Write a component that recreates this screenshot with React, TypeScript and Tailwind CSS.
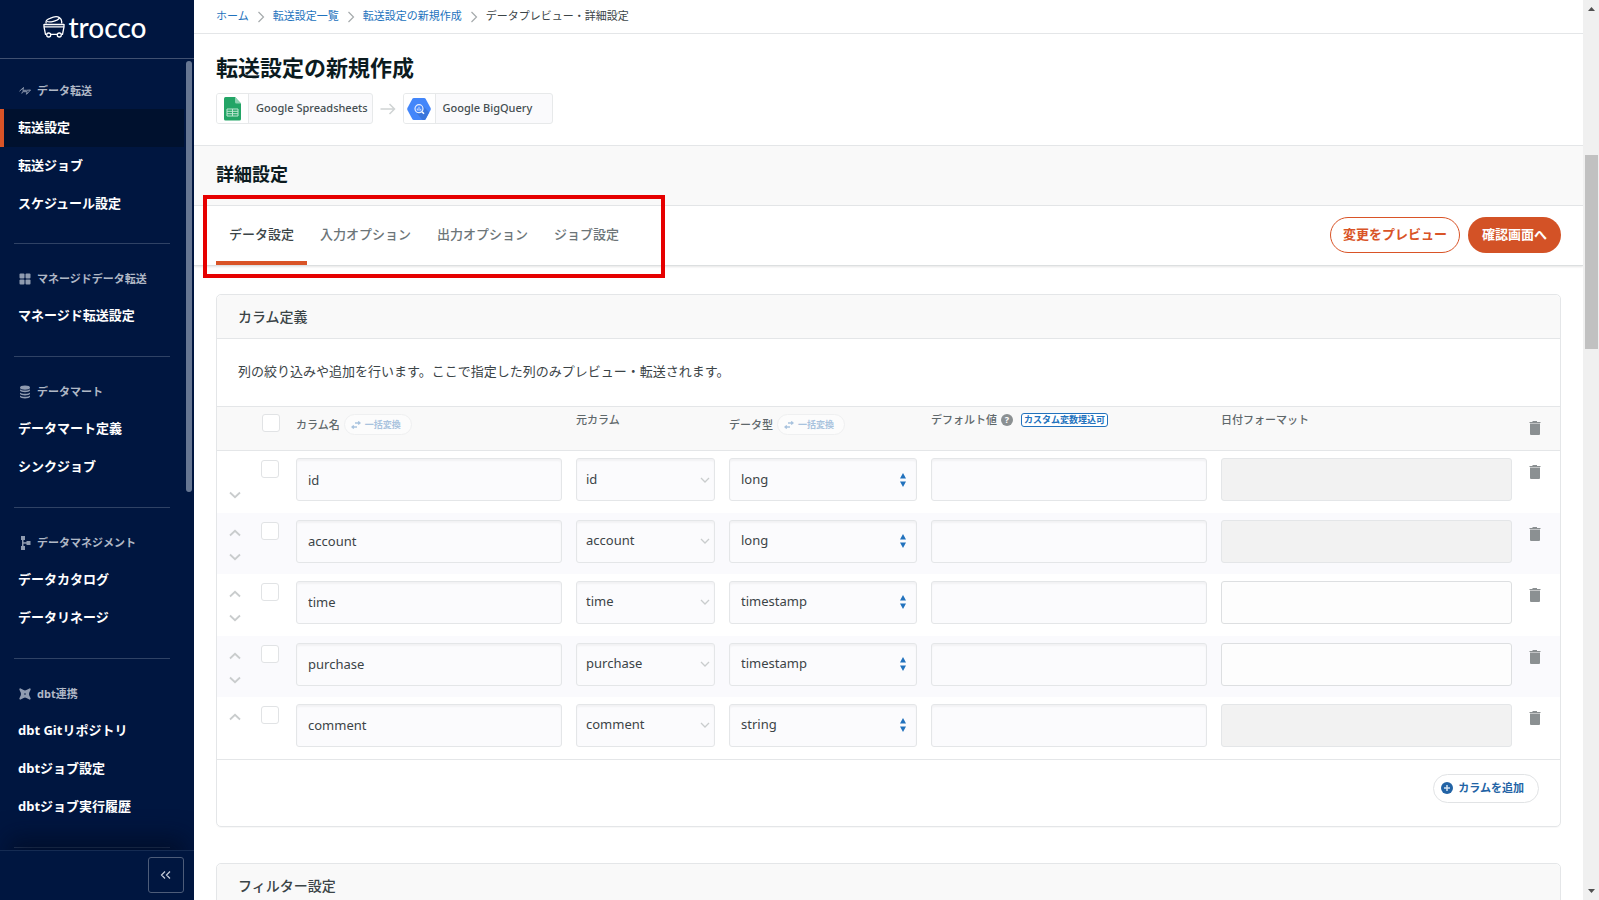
import React from "react";

type NavSection = { label: string; icon: React.ReactNode; items: string[]; active?: string };

type ColumnRow = { name: string; type: string; hasFormat: boolean };

const TransferIcon = () => (
  <svg width="12" height="12" viewBox="0 0 12 12" fill="none" stroke="currentColor" strokeWidth="1" aria-hidden="true">
    <path d="M0.500 6.200 L4.500 2.500 L3.800 5.300 H7.500 L11.500 5 L7.500 9.300 L8.200 6.700 H3.600 L2.800 8.500" />
  </svg>
);

const GridIcon = () => (
  <svg width="12" height="12" viewBox="0 0 12 12" fill="currentColor" aria-hidden="true">
    <rect x="0.500" y="0.500" width="5" height="5" rx="1" />
    <rect x="6.500" y="0.500" width="5" height="5" rx="1" />
    <rect x="0.500" y="6.500" width="5" height="5" rx="1" />
    <rect x="6.500" y="6.500" width="5" height="5" rx="1" />
  </svg>
);

const DatabaseIcon = () => (
  <svg width="12" height="14" viewBox="0 0 12 14" fill="currentColor" aria-hidden="true">
    <ellipse cx="6" cy="2.600" rx="5" ry="2.200" />
    <path d="M1 4.200c1 1.700 9 1.700 10 0v1.400c-.6 2.300-9.400 2.300-10 0z" />
    <path d="M1 7.400c1 1.700 9 1.700 10 0v1.400c-.6 2.300-9.400 2.300-10 0z" />
    <path d="M1 10.500c1 1.700 9 1.700 10 0v1.200c-.6 2.300-9.400 2.300-10 0z" />
  </svg>
);

const TreeIcon = () => (
  <svg width="12" height="14" viewBox="0 0 12 14" fill="currentColor" aria-hidden="true">
    <rect x="2" y="0" width="4" height="4" />
    <rect x="2" y="10" width="4" height="4" />
    <rect x="3" y="3" width="1.500" height="8" />
    <rect x="3" y="6.200" width="5" height="1.500" />
    <rect x="7.500" y="5" width="4" height="4" />
  </svg>
);

const DbtIcon = () => (
  <svg width="12" height="12" viewBox="0 0 12 12" fill="currentColor" aria-hidden="true">
    <path
      fillRule="evenodd"
      d="M0.300 1.400Q.4.200 1.600.4L4.600 2.100Q6 2.800 7.400 2.100L10.400.4Q11.600.2 11.700 1.400L10.300 4.600Q9.700 6 10.300 7.400L11.700 10.600Q11.600 11.800 10.400 11.600L7.400 9.900Q6 9.200 4.600 9.900L1.600 11.600Q.4 11.800.3 10.600L1.700 7.400Q2.300 6 1.700 4.600ZM6 5.200a.8.800 0 1 0 0 1.600a.8.800 0 1 0 0-1.600Z"
    />
  </svg>
);

const CartIcon = () => (
  <svg width="22" height="22" viewBox="0 0 22 22" fill="none" stroke="white" strokeWidth="1.300" aria-hidden="true">
    <path d="M3.300 7.500C2.200 4.600 4.500 3.200 7 2.300C10 .9 14.500.3 16.400 1.600C18.500 3 19 5.500 18.500 7.500" />
    <path d="M4 5.500C6.500 6.700 14.500 5 16.500 2.200" />
    <path d="M1 8.500H21M1 10.900H21" />
    <path d="M1 8V11L2.500 18.300H3.500M8 18.300H14M18.500 18.300H19.500L21 11V8" />
    <circle cx="5.700" cy="19" r="2" />
    <circle cx="16.300" cy="19" r="2" />
  </svg>
);

const Chevron = ({ up }: { up?: boolean }) => (
  <svg width="12" height="8" viewBox="0 0 12 8" fill="none" stroke="currentColor" strokeWidth="1.800" aria-hidden="true">
    <path d={up ? "M1 6.500L6 1.800L11 6.500" : "M1 1.500L6 6.200L11 1.500"} />
  </svg>
);

const TrashIcon = () => (
  <svg width="12" height="14" viewBox="0 0 12 14" fill="#8b9092" aria-hidden="true">
    <path d="M3.500 0h4.500v1h3.500v1H.5V1h3z" />
    <path d="M1 2.500h10V13q0 1-1 1H2q-1 0-1-1z" />
  </svg>
);

const SwapIcon = () => (
  <svg width="10" height="8" viewBox="0 0 10 8" fill="none" stroke="currentColor" strokeWidth="1.300" aria-hidden="true">
    <path d="M4 2H9M7.200 0.400L9 2L7.200 3.600M6 6H1M2.800 4.400L1 6L2.800 7.600" />
  </svg>
);

const SheetsIcon = () => (
  <svg width="17" height="24" viewBox="0 0 17 24" aria-hidden="true">
    <path d="M1.500 0H11l6 6.500V22q0 1.500-1.500 1.500h-14Q0 23.500 0 22V1.500Q0 0 1.500 0z" fill="#23a566" />
    <path d="M11 0l6 6.500h-4.500Q11 6.500 11 5z" fill="#8ed1b1" />
    <path d="M3 12h11v7H3zM3 14.300h11M3 16.700h11M8.500 12v7" fill="none" stroke="#bfe6d2" strokeWidth="1" />
  </svg>
);

const BigQueryIcon = () => (
  <svg width="24" height="24" viewBox="0 0 24 24" aria-hidden="true">
    <path d="M6.800 1h10.400q.9 0 1.400.8l5 9.300q.4.900 0 1.800l-5 9.300q-.5.800-1.400.8H6.800q-.9 0-1.400-.8l-5-9.300q-.4-.9 0-1.800l5-9.300Q5.900 1 6.800 1z" fill="#4386fa" />
    <path d="M15 8l7.200 7.300-3.600 6.900q-.5.800-1.400.8H15.500L9.500 16z" fill="#3a76dc" />
    <circle cx="12" cy="11.700" r="4" fill="#4386fa" stroke="#e4edff" strokeWidth="1.200" />
    <path d="M10.300 11.500v2M12 9.800v4M13.700 11.800v1.700" stroke="#d5e2ff" strokeWidth="1" />
    <path d="M15 14.800l2 2" stroke="#fff" strokeWidth="1.600" />
  </svg>
);

const sections: NavSection[] = [
  { label: "データ転送", icon: <TransferIcon />, items: ["転送設定", "転送ジョブ", "スケジュール設定"], active: "転送設定" },
  { label: "マネージドデータ転送", icon: <GridIcon />, items: ["マネージド転送設定"] },
  { label: "データマート", icon: <DatabaseIcon />, items: ["データマート定義", "シンクジョブ"] },
  { label: "データマネジメント", icon: <TreeIcon />, items: ["データカタログ", "データリネージ"] },
  { label: "dbt連携", icon: <DbtIcon />, items: ["dbt Gitリポジトリ", "dbtジョブ設定", "dbtジョブ実行履歴"] },
];

const rows: ColumnRow[] = [
  { name: "id", type: "long", hasFormat: false },
  { name: "account", type: "long", hasFormat: false },
  { name: "time", type: "timestamp", hasFormat: true },
  { name: "purchase", type: "timestamp", hasFormat: true },
  { name: "comment", type: "string", hasFormat: false },
];

const crumbs = ["ホーム", "転送設定一覧", "転送設定の新規作成"];
const tabs = ["データ設定", "入力オプション", "出力オプション", "ジョブ設定"];

const field =
  "block h-[43px] w-full rounded-[3px] border border-[#e4e6e8] bg-[#fbfbfd] text-[13px] text-[#3b4447] shadow-[inset_0_2px_2px_rgba(0,0,0,0.04)] outline-none";
const checkbox = "block size-[18px] appearance-none rounded-[3px] border border-[#e1e3e5] bg-white";

function Sidebar() {
  return (
    <aside className="flex w-[194px] shrink-0 flex-col overflow-hidden bg-[#001640]">
      <div className="flex h-[59px] shrink-0 items-center justify-center gap-[3px] border-b border-[#405070] pr-1 pb-[5px]">
        <CartIcon />
        <span className="font-[Lato,sans-serif] text-[28px] leading-8 font-medium text-white">trocco</span>
      </div>
      <div className="flex min-h-0 flex-1">
        <nav className="w-[184px] overflow-hidden">
          {sections.map((s, i) => (
            <div key={s.label}>
              {i > 0 && <hr className="mx-[14px] border-[#2f4265]" />}
              <div className={i > 0 ? "pt-[17px] pb-[21px]" : "pt-[14px] pb-5"}>
                <div className="flex h-9 items-center gap-[6px] pl-[19px] text-[11px] font-bold text-[#b0b8c6]">
                  <span className="flex w-3 justify-center text-[#8f9bb0]">{s.icon}</span>
                  {s.label}
                </div>
                <ul>
                  {s.items.map((item) => (
                    <li key={item}>
                      <a
                        href="#"
                        className={
                          item === s.active
                            ? "flex h-[38px] items-center border-l-4 border-[#d95427] bg-[#00112e] pl-[14px] text-[13px] font-bold text-white"
                            : "flex h-[38px] items-center pl-[18px] text-[13px] font-bold text-white"
                        }
                      >
                        {item}
                      </a>
                    </li>
                  ))}
                </ul>
              </div>
            </div>
          ))}
          <hr className="mx-[14px] border-[#2f4265]" />
        </nav>
        <div className="ml-[2px] pt-[2px]">
          <div className="h-[431px] w-[6px] rounded-full bg-[#667692]" />
        </div>
      </div>
      <div className="z-10 flex h-[50px] shrink-0 items-center justify-end border-t border-[#152b52] bg-[#001640] pr-[10px] pb-[2px] shadow-[0_-20px_24px_-8px_rgba(0,12,34,0.7)]">
        <button type="button" aria-label="メニューを閉じる" className="flex size-9 items-center justify-center rounded-[3px] border border-[#4d5c79] text-[#c5ccd8]">
          <svg width="12" height="10" viewBox="0 0 12 10" fill="none" stroke="currentColor" strokeWidth="1.200" aria-hidden="true">
            <path d="M5 1.500L1.500 5L5 8.500M10 1.500L6.500 5L10 8.500" />
          </svg>
        </button>
      </div>
    </aside>
  );
}

function BulkButton() {
  return (
    <button type="button" className="flex h-[21px] w-[68px] items-center gap-1 rounded-full border border-[#eff0f1] bg-[#fcfcfc] pl-[6px] text-[9px] font-bold text-[#a9c3de]">
      <SwapIcon />
      一括変換
    </button>
  );
}

function TrashButton({ label }: { label: string }) {
  return (
    <button type="button" aria-label={label} className="flex w-full justify-center pr-[9px]">
      <TrashIcon />
    </button>
  );
}

function ColumnTable() {
  return (
    <table className="w-full table-fixed border-collapse text-left">
      <colgroup>
        <col className="w-[36px]" />
        <col className="w-[36px]" />
        <col className="w-[280px]" />
        <col className="w-[153px]" />
        <col className="w-[202px]" />
        <col className="w-[290px]" />
        <col className="w-[305px]" />
        <col className="w-[41px]" />
      </colgroup>
      <thead>
        <tr className="h-[44px] border-y border-[#e4e6e8] bg-[#f9f9f9] align-top text-[11px] leading-4 text-[#5f686b]">
          <td />
          <td className="pt-[7px] pl-[9px]">
            <input type="checkbox" aria-label="すべて選択" className={checkbox} />
          </td>
          <th className="px-[7px] pt-[7px] font-medium">
            <div className="flex items-center gap-1">
              カラム名 <BulkButton />
            </div>
          </th>
          <th className="px-[7px] pt-[5px] font-medium">元カラム</th>
          <th className="px-[7px] pt-[7px] font-medium">
            <div className="flex items-center gap-1">
              データ型 <BulkButton />
            </div>
          </th>
          <th className="px-[7px] pt-[5px] font-medium">
            <div className="flex items-center gap-1">
              デフォルト値
              <span className="flex size-3 items-center justify-center rounded-full bg-[#8b9092] text-[9px] font-bold text-white">?</span>
              <span className="ml-1 flex h-[14px] items-center rounded-[3px] border border-[#2272bd] bg-white px-[2px] text-[9px] font-bold text-[#2272bd]">
                カスタム変数埋込可
              </span>
            </div>
          </th>
          <th className="px-[7px] pt-[5px] font-medium">日付フォーマット</th>
          <td className="pt-[14px]">
            <TrashButton label="すべて削除" />
          </td>
        </tr>
      </thead>
      <tbody>
        {rows.map((r, i) => (
          <tr key={r.name} className="h-[62px] align-top even:h-[61px] even:bg-[#fafafd]">
            <td className="pt-4 text-[#c9cccd]">
              <div className="flex flex-col items-center gap-4">
                <button type="button" aria-label="上へ移動" className={i === 0 ? "invisible" : ""}>
                  <Chevron up />
                </button>
                <button type="button" aria-label="下へ移動" className={i === rows.length - 1 ? "invisible" : ""}>
                  <Chevron />
                </button>
              </div>
            </td>
            <td className="pt-[9px] pl-2">
              <input type="checkbox" aria-label={r.name + "を選択"} className={checkbox} />
            </td>
            <td className="px-[7px] pt-[7px]">
              <input aria-label="カラム名" defaultValue={r.name} className={field + " px-[11px]"} />
            </td>
            <td className="px-[7px] pt-[7px]">
              <div className="relative">
                <select aria-label="元カラム" defaultValue={r.name} className={field + " appearance-none px-[9px]"}>
                  {rows.map((o) => (
                    <option key={o.name}>{o.name}</option>
                  ))}
                </select>
                <span className="pointer-events-none absolute inset-y-0 right-[5px] flex items-center text-[#c9cccd]">
                  <svg width="10" height="6" viewBox="0 0 10 6" fill="none" stroke="currentColor" strokeWidth="1.300" aria-hidden="true">
                    <path d="M1 1L5 5L9 1" />
                  </svg>
                </span>
              </div>
            </td>
            <td className="px-[7px] pt-[7px]">
              <div className="relative">
                <select aria-label="データ型" defaultValue={r.type} className={field + " appearance-none px-[11px]"}>
                  <option>long</option>
                  <option>timestamp</option>
                  <option>string</option>
                </select>
                <span className="pointer-events-none absolute inset-y-0 right-[11px] flex items-center">
                  <svg width="6" height="14" viewBox="0 0 6 14" fill="#2272bd" aria-hidden="true">
                    <path d="M3 0L6 5.500H0zM3 14L6 8.500H0z" />
                  </svg>
                </span>
              </div>
            </td>
            <td className="px-[7px] pt-[7px]">
              <input aria-label="デフォルト値" className={field + " px-[11px]"} />
            </td>
            <td className="px-[7px] pt-[7px]">
              <input
                aria-label="日付フォーマット"
                disabled={!r.hasFormat}
                className={
                  r.hasFormat
                    ? "block h-[43px] w-full rounded-[3px] border border-[#dddfe1] bg-[#fdfdfd] px-[11px] text-[13px]"
                    : "block h-[43px] w-full rounded-[3px] border border-[#e4e6e8] bg-[#f2f2f2] px-[11px] text-[13px]"
                }
              />
            </td>
            <td className="pt-[14px]">
              <TrashButton label={r.name + "を削除"} />
            </td>
          </tr>
        ))}
      </tbody>
    </table>
  );
}

function Connector({ icon, name, wide }: { icon: React.ReactNode; name: string; wide?: boolean }) {
  return (
    <div className="flex h-[31px] overflow-hidden rounded-[3px] border border-[#e7e9ea] bg-[#fafafc]">
      <span className="flex w-8 items-center justify-center border-r border-[#e7e9ea] bg-white">{icon}</span>
      <span
        className={
          wide
            ? "flex items-center pr-5 pl-[7px] text-[11px] font-medium text-[#454e51]"
            : "flex items-center pr-1 pl-[7px] text-[11px] font-medium text-[#454e51]"
        }
      >
        {name}
      </span>
    </div>
  );
}

export default function App() {
  return (
    <div className="flex h-screen overflow-hidden bg-white font-['Noto_Sans','Noto_Sans_CJK_JP',sans-serif] text-[#3b4447]">
      <Sidebar />
      <main className="min-w-0 flex-1 overflow-hidden">
        <nav aria-label="パンくず" className="flex h-[34px] items-center border-b border-[#e4e6e8] px-[22px] text-[11px]">
          {crumbs.map((c) => (
            <React.Fragment key={c}>
              <a href="#" className="text-[#2272bd]">
                {c}
              </a>
              <svg width="8" height="12" viewBox="0 0 8 12" className="mx-2" fill="none" stroke="#a5aaac" strokeWidth="1.200" aria-hidden="true">
                <path d="M1.500 1L6.500 6L1.500 11" />
              </svg>
            </React.Fragment>
          ))}
          <span>データプレビュー・詳細設定</span>
        </nav>

        <header className="h-[111px] px-[22px] pt-[17px]">
          <h1 className="text-[22px] leading-8 font-bold text-[#0c1b1f]">転送設定の新規作成</h1>
          <div className="mt-[10px] flex items-center">
            <Connector icon={<SheetsIcon />} name="Google Spreadsheets" />
            <svg width="16" height="12" viewBox="0 0 16 12" className="mx-[7px]" fill="none" stroke="#cfd3d4" strokeWidth="1.500" aria-hidden="true">
              <path d="M0.500 6H14.500M9.500 1L14.500 6L9.500 11" />
            </svg>
            <Connector icon={<BigQueryIcon />} name="Google BigQuery" wide />
          </div>
        </header>

        <div className="flex h-[61px] items-center border-y border-[#e4e6e8] bg-[#f9f9f9] px-[22px] pb-[2px]">
          <h2 className="text-[18px] font-bold text-[#0c1b1f]">詳細設定</h2>
        </div>

        <div className="relative flex h-[60px] items-center justify-between border-b border-[#dcdfe0] px-[22px] shadow-[0_1px_2px_rgba(0,0,0,0.1)]">
          <div role="tablist" className="flex h-full">
            {tabs.map((t, i) => (
              <button
                key={t}
                type="button"
                role="tab"
                aria-selected={i === 0}
                className={
                  i === 0
                    ? "border-b-4 border-[#d95427] px-[13px] pt-[2px] text-[13px] font-medium text-[#3b4447]"
                    : "border-b-4 border-transparent px-[13px] pt-[2px] text-[13px] font-medium text-[#6c7578]"
                }
              >
                {t}
              </button>
            ))}
          </div>
          <div className="flex gap-2 pb-[2px]">
            <button type="button" className="h-9 rounded-full border border-[#d95427] bg-white px-3 text-[13px] font-bold text-[#d95427]">
              変更をプレビュー
            </button>
            <button type="button" className="h-9 rounded-full bg-[#d35226] px-[14px] text-[13px] font-bold text-white">
              確認画面へ
            </button>
          </div>
          <div className="pointer-events-none absolute top-[-11px] left-[9px] h-[83px] w-[462px] border-4 border-[#e60000]" />
        </div>

        <div className="flex flex-col gap-9 px-[22px] pt-7">
          <section className="rounded-[5px] border border-[#e4e6e8] shadow-[0_1px_1px_rgba(0,0,0,0.03)]">
            <h3 className="flex h-[44px] items-center rounded-t-[5px] border-b border-[#e4e6e8] bg-[#f9f9f9] px-[21px] text-[14px] font-medium">カラム定義</h3>
            <p className="px-[21px] pt-5 pb-[23px] text-[13px] leading-6">
              列の絞り込みや追加を行います。ここで指定した列のみプレビュー・転送されます。
            </p>
            <ColumnTable />
            <div className="flex h-[67px] justify-end border-t border-[#e4e6e8] pt-[14px] pr-[21px]">
              <button type="button" className="flex h-[29px] items-center gap-[5px] rounded-full border border-[#e1e3e5] bg-white pr-[14px] pl-[7px] text-[11px] font-bold text-[#2263a5]">
                <svg width="12" height="12" viewBox="0 0 12 12" aria-hidden="true">
                  <circle cx="6" cy="6" r="6" fill="#2263a5" />
                  <path d="M6 3v6M3 6h6" stroke="#d5e3f2" strokeWidth="1.500" />
                </svg>
                カラムを追加
              </button>
            </div>
          </section>

          <section className="rounded-t-[5px] border border-[#e4e6e8]">
            <h3 className="flex h-[44px] items-center rounded-t-[5px] border-b border-[#e4e6e8] bg-[#f9f9f9] px-[21px] text-[14px] font-medium">フィルター設定</h3>
          </section>
        </div>
      </main>

      <div aria-hidden="true" className="flex w-4 shrink-0 flex-col items-center bg-[#f0f0f0] py-[7px]">
        <svg width="7" height="4" viewBox="0 0 7 4" fill="#505050">
          <path d="M3.500 0L7 4H0z" />
        </svg>
        <div className="mt-[144px] h-[194px] w-[13px] bg-[#c1c1c1]" />
        <svg width="7" height="4" viewBox="0 0 7 4" fill="#505050" className="mt-auto">
          <path d="M3.500 4L7 0H0z" />
        </svg>
      </div>
    </div>
  );
}
